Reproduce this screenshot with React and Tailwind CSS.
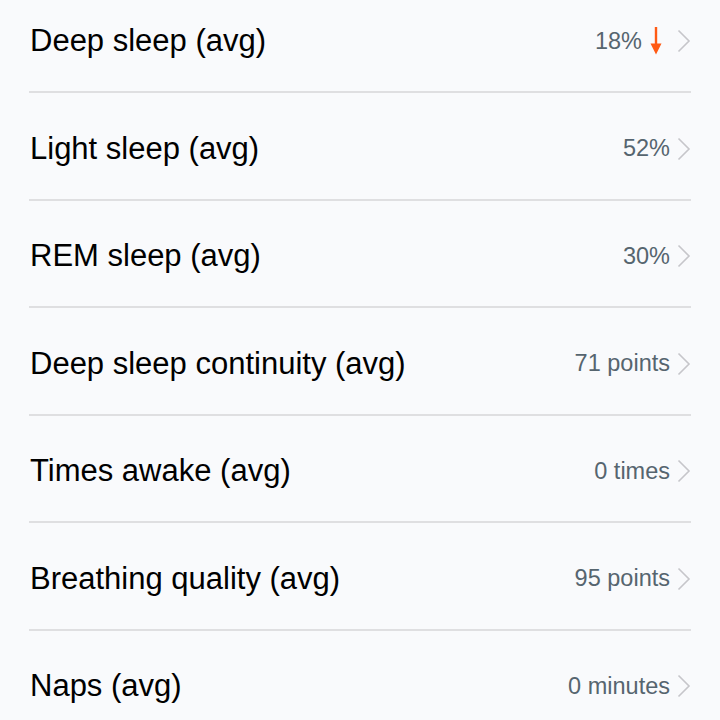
const rows = [
  { label: "Deep sleep (avg)", value: "18%", down: true },
  { label: "Light sleep (avg)", value: "52%" },
  { label: "REM sleep (avg)", value: "30%" },
  { label: "Deep sleep continuity (avg)", value: "71 points" },
  { label: "Times awake (avg)", value: "0 times" },
  { label: "Breathing quality (avg)", value: "95 points" },
  { label: "Naps (avg)", value: "0 minutes" },
];

const DownArrow = () => (
  <svg width="12" height="28" viewBox="0 0 12 28" className="ml-[8px]">
    <path d="M6 0 V19" stroke="#ff5a14" strokeWidth="2.4" />
    <path d="M0.5 16.5 L11.5 16.5 L6 27.5 Z" fill="#ff5a14" />
  </svg>
);

const Chevron = ({ wide }) => (
  <svg
    width="14"
    height="24"
    viewBox="0 0 14 24"
    className={wide ? "ml-[15px]" : "ml-[7px]"}
  >
    <path d="M1.5 1.5 L12 12 L1.5 22.5" fill="none" stroke="#c6c6ca" strokeWidth="1.6" />
  </svg>
);

export default function App() {
  return (
    <div
      className="min-h-screen w-[720px] h-[720px] overflow-hidden bg-[#f9fafc]"
      style={{ fontFamily: '"Liberation Sans", Arial, sans-serif' }}
    >
      <div className="-mt-[14.5px] px-[29px]">
        {rows.map((row) => (
          <div
            key={row.label}
            className="flex h-[107.5px] items-center border-b-2 border-[#dfdfe1] pt-[6px]"
          >
            <div className="flex-1 pl-[1px] text-[31px] text-black">{row.label}</div>
            <div className="flex items-center">
              <span className="text-[23.5px] text-[#56656f]">{row.value}</span>
              {row.down && <DownArrow />}
              <Chevron wide={row.down} />
            </div>
          </div>
        ))}
      </div>
    </div>
  );
}
